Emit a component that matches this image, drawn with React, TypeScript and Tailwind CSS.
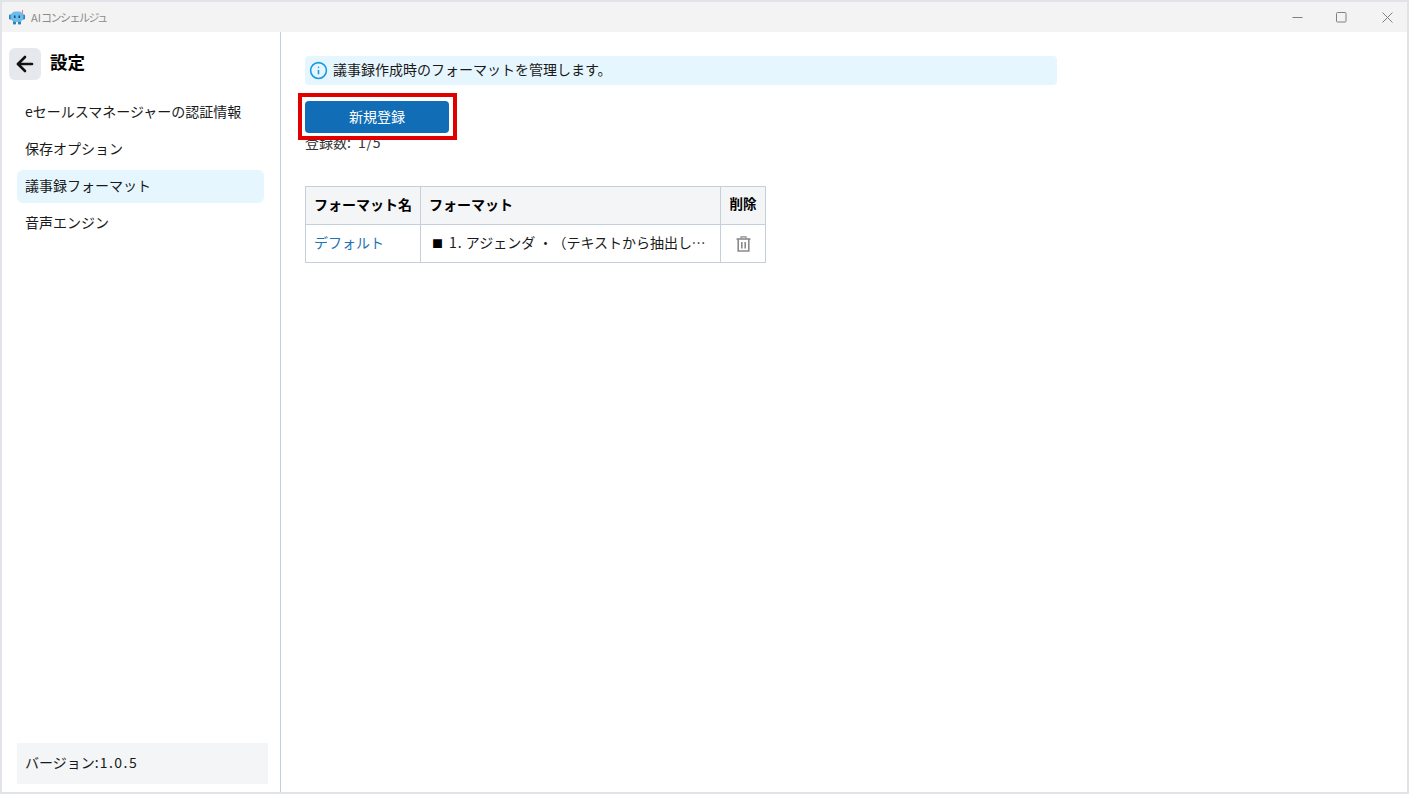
import { ArrowLeft, Info } from 'lucide-react';

const menuItems = ['eセールスマネージャーの認証情報', '保存オプション', '議事録フォーマット', '音声エンジン'];

function AppLogo() {
  return (
    <svg width="16" height="16" viewBox="0 0 16 16">
      <path d="M13.5 5 V1" stroke="#e0709a" strokeWidth="1" />
      <rect x="0" y="5.5" width="3" height="5" rx="1" fill="#2f7fb8" />
      <rect x="13" y="5.5" width="3" height="5" rx="1" fill="#2f7fb8" />
      <rect x="4" y="12" width="3" height="3.5" rx="1" fill="#2f7fb8" />
      <rect x="9" y="12" width="3" height="3.5" rx="1" fill="#2f7fb8" />
      <rect x="1.5" y="2.5" width="13" height="10.5" rx="5" fill="#6cbcea" />
      <rect x="5" y="6.5" width="1.5" height="2.5" fill="#1c4a73" />
      <rect x="9.5" y="6.5" width="1.5" height="2.5" fill="#1c4a73" />
    </svg>
  );
}

function TrashIcon() {
  return (
    <svg width="15" height="16" viewBox="0 0 15 16" fill="none" stroke="#8a8a8a">
      <path d="M0.5 3 H14.5" strokeWidth="1.6" />
      <path d="M5 2.5 V0.8 H10 V2.5" strokeWidth="1.2" />
      <path d="M2.2 3 V15 H12.8 V3" strokeWidth="1.6" />
      <path d="M5.8 6 V12.5 M9.2 6 V12.5" strokeWidth="1.6" />
    </svg>
  );
}

function TitleBar() {
  return (
    <div className="flex h-[30px] items-center justify-between bg-[#f3f3f3] pl-[7px]">
      <div className="flex items-center gap-[6px]">
        <AppLogo />
        <span className="text-[11px] text-[#8a8a8a]">
          AI<span className="tracking-[-1.5px]">コンシェルジュ</span>
        </span>
      </div>
      <div className="flex items-center text-[#808080]">
        <div className="flex w-[44px] justify-center">
          <svg width="11" height="11" viewBox="0 0 11 11">
            <path d="M0.5 5.5 H10.5" stroke="currentColor" strokeWidth="1" />
          </svg>
        </div>
        <div className="mr-1 flex w-[44px] justify-center">
          <svg width="11" height="11" viewBox="0 0 11 11">
            <rect x="0.5" y="0.5" width="9.5" height="9.5" rx="1" fill="none" stroke="currentColor" strokeWidth="1" />
          </svg>
        </div>
        <div className="flex w-10 justify-center">
          <svg width="11" height="11" viewBox="0 0 11 11">
            <path d="M0.5 0.5 L10.5 10.5 M10.5 0.5 L0.5 10.5" stroke="currentColor" strokeWidth="1" />
          </svg>
        </div>
      </div>
    </div>
  );
}

function Sidebar() {
  return (
    <aside className="flex w-[279px] shrink-0 flex-col border-r border-[#c5cfdc] pb-2">
      <div className="flex items-center gap-[9px] pt-4 pl-[7px]">
        <button className="flex h-8 w-8 items-center justify-center rounded-md bg-[#e5e9ed] text-[#111]">
          <ArrowLeft size={24} strokeWidth={2.6} />
        </button>
        <h1 className="pb-[3px] text-[17.5px] font-bold text-black">設定</h1>
      </div>
      <nav className="mt-4 flex flex-1 flex-col gap-1 pr-4 pl-[15px]">
        {menuItems.map((item) => (
          <div
            key={item}
            className={`flex h-[33px] items-center rounded-md px-2 pb-1 text-sm text-[#1a1a1a] ${
              item === '議事録フォーマット' ? 'bg-[#e6f6fe]' : ''
            }`}
          >
            {item}
          </div>
        ))}
      </nav>
      <div className="mr-3 ml-[15px] flex h-[41px] items-center bg-[#f3f5f7] px-2 pb-1 text-sm text-[#1a1a1a]">
        バージョン:<span className="ml-[1px] tracking-[1.5px]">1.0.5</span>
      </div>
    </aside>
  );
}

function FormatTable() {
  return (
    <table className="mt-[33px] w-[461px] table-fixed border-collapse text-sm text-[#1a1a1a] [text-spacing-trim:space-all]">
      <thead>
        <tr className="h-[38px] bg-[#f3f5f7] font-bold text-black">
          <th className="w-[115px] border border-[#c5cfdc] pb-[3px] pl-2 text-left whitespace-nowrap">フォーマット名</th>
          <th className="w-[300px] border border-[#c5cfdc] px-2 pb-[3px] text-left">フォーマット</th>
          <th className="border border-[#c5cfdc] pb-[3px] text-center text-[13.5px]">削除</th>
        </tr>
      </thead>
      <tbody>
        <tr className="h-[38px]">
          <td className="border border-[#c5cfdc] px-2 pb-[3px] text-[#1d72b8]">デフォルト</td>
          <td className="truncate border border-[#c5cfdc] px-[11px] pb-[3px]">
            <span className="mr-[6px] text-[11px] text-black">■</span>
            <span className="tracking-[1px]">1.</span> アジェンダ ・（テキストから抽出して記載してください）
          </td>
          <td className="border border-[#c5cfdc]">
            <div className="flex justify-center">
              <TrashIcon />
            </div>
          </td>
        </tr>
      </tbody>
    </table>
  );
}

export default function App() {
  return (
    <div
      className="flex h-[794px] w-[1409px] flex-col overflow-hidden border-2 border-[#e0e4e8] bg-white"
      style={{ fontFamily: '"Noto Sans CJK JP", "Liberation Sans", sans-serif' }}
    >
      <TitleBar />
      <div className="flex min-h-0 flex-1">
        <Sidebar />
        <main className="flex-1 pt-6 pl-6">
          <div className="flex h-[29px] w-[752px] items-center gap-[5px] rounded bg-[#e6f6fe] pl-1 text-sm text-[#1a1a1a]">
            <Info size={19} strokeWidth={2} className="text-[#1a9be0]" />
            <span className="pb-1">議事録作成時のフォーマットを管理します。</span>
          </div>
          <div className="relative mt-4 w-[144px]">
            <button className="h-8 w-[144px] rounded bg-[#116db5] pb-[2px] text-sm text-white">新規登録</button>
            {/* red highlight laid over the button */}
            <div className="absolute -top-2 -left-[7px] h-[47px] w-[159px] border-4 border-[#e00000]" />
          </div>
          <p className="-mt-[1px] pb-[1px] text-sm leading-5 text-[#333]">
            登録数:<span className="ml-[7px] tracking-[0.8px]">1/5</span>
          </p>
          <FormatTable />
        </main>
      </div>
    </div>
  );
}
